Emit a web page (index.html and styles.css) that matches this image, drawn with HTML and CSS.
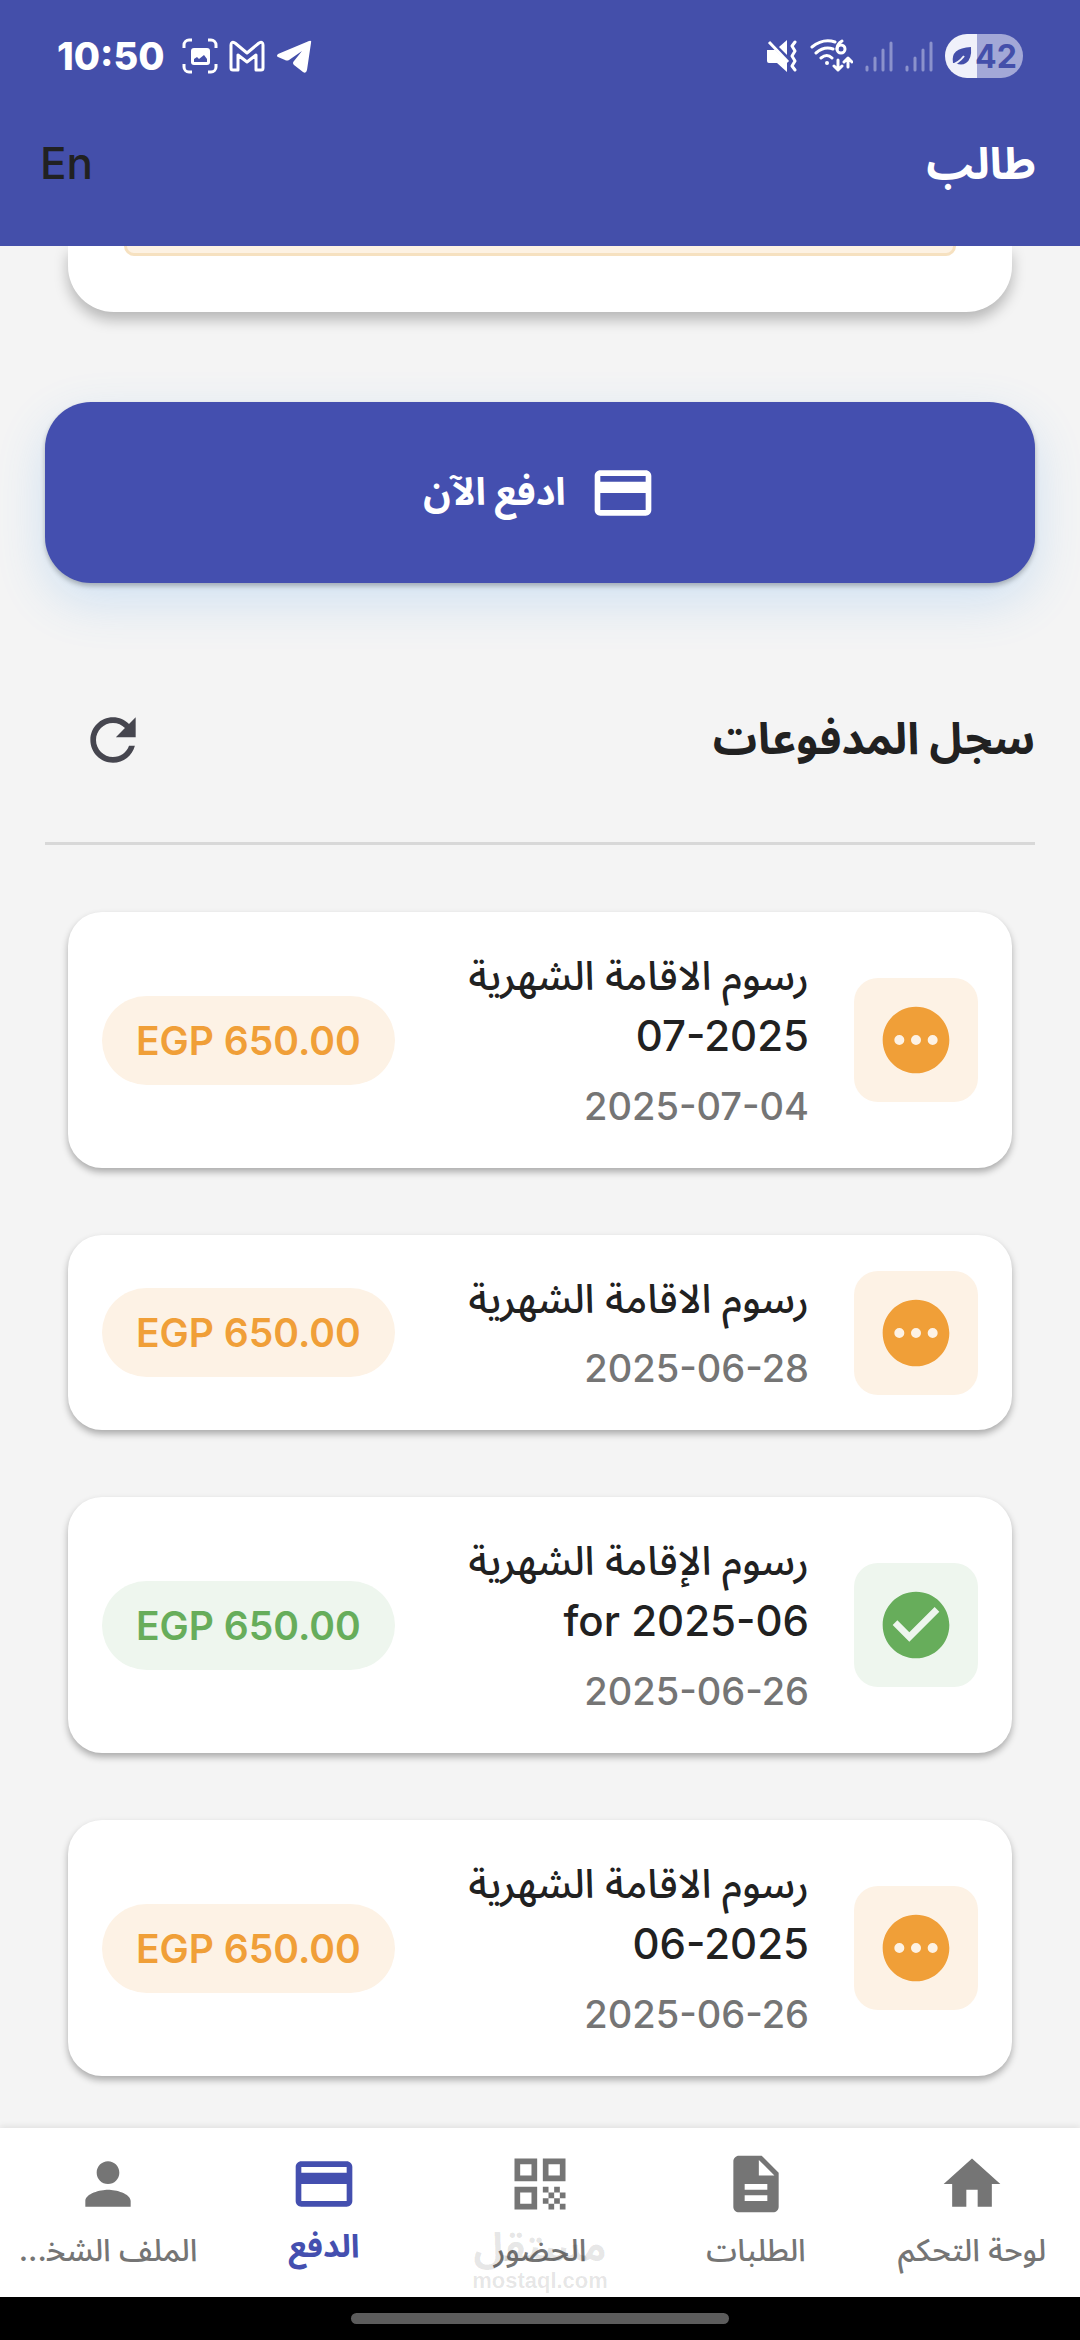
FILE: index.html
```html
<!DOCTYPE html>
<html lang="ar" dir="rtl">
<head>
    <meta charset="UTF-8">
    <meta name="viewport" content="width=device-width, initial-scale=1.0">
    <title>طالب - الدفع</title>
    <link rel="stylesheet" href="styles.css">
</head>
<body>
    <header>
        <div class="status-bar">
            <div class="status-left">
                <span class="clock">10:50</span>
                <svg width="36" height="36" viewBox="0 0 36 36"><path d="M2 10V7a5 5 0 0 1 5-5h3M26 2h3a5 5 0 0 1 5 5v3M34 26v3a5 5 0 0 1-5 5h-3M10 34H7a5 5 0 0 1-5-5v-3" fill="none" stroke="#fff" stroke-width="3"/><rect x="9" y="10" width="19" height="17" rx="3" fill="#fff"/><path d="M12 24v-3l3-2 2 2 5-4 3 4v3z" fill="#444faa"/></svg>
                <svg width="36" height="36" viewBox="0 0 36 36"><path d="M2 30V7q0-4 4-2l12 10L30 5q4-2 4 2v23q0 2-2 2h-5V17l-9 7-9-7v15H4q-2 0-2-2z" fill="none" stroke="#fff" stroke-width="3" stroke-linejoin="round"/></svg>
                <svg width="36" height="36" viewBox="0 0 36 36"><path d="M2 16 33 3q3-1 2 2l-4 27q-1 4-4 2l-9-7q-2-2 0-4l8-10-13 9q-2 1-4 0l-7-3q-2-1 0-3z" fill="#fff"/></svg>
            </div>
            <div class="status-right">
                <svg width="32" height="32" viewBox="0 0 32 32"><path d="M1 10h8l12 12v10L11 23H3q-2 0-2-2z" fill="#fff"/><path d="M13 7l8-7v15z" fill="#fff"/><path d="M3 2l19 20" stroke="#fff" stroke-width="3"/><path d="M29 2l-3 4 3 5-3 5 3 5-3 5 3 4" fill="none" stroke="#fff" stroke-width="3" stroke-linejoin="round" stroke-linecap="round"/></svg>
                <svg width="43" height="36" viewBox="0 0 43 36"><g fill="none" stroke="#fff" stroke-width="3" stroke-linecap="round" stroke-linejoin="round"><path d="M2 9Q13 0 25 4M6 15q8-7 17-4M11 20q6-5 11 0M28 22v10m-4-4 4 4 4-4M38 29V20m-4 4 4-4 4 4"/><circle cx="31" cy="11" r="4"/><path d="M27 11q0-5 5-8"/></g><circle cx="17" cy="25" r="2" fill="#fff"/></svg>
                <svg width="28" height="32" viewBox="0 0 28 32"><path d="M2 27v3M10 18v12M18 10v20M26 3v27" stroke="#8b92cc" stroke-width="3" stroke-linecap="round"/></svg>
                <svg width="28" height="32" viewBox="0 0 28 32"><path d="M2 27v3M10 18v12M18 10v20M26 3v27" stroke="#8b92cc" stroke-width="3" stroke-linecap="round"/></svg>
                <div class="battery">
                    <svg width="22" height="20" viewBox="0 0 22 20"><path d="M3 17Q0 2 21 1q1 12-5 16-5 3-10 0z" fill="#444faa"/><path d="M0 19q8-1 14-9" fill="none" stroke="#f0f1fa" stroke-width="2"/></svg>
                    <span>42</span>
                </div>
            </div>
        </div>
        <div class="title-bar">
            <h1>طالب</h1>
            <button class="btn-lang" type="button">En</button>
        </div>
    </header>

    <main>
        <div class="summary">
            <div class="summary-note"></div>
        </div>

        <button class="btn-pay" type="button">
            <svg width="68" height="68" viewBox="0 0 24 24"><path fill="currentColor" d="M20 4H4c-1.110 0-1.990.89-1.990 2L2 18c0 1.110.89 2 2 2h16c1.110 0 2-.89 2-2V6c0-1.110-.89-2-2-2zm0 14H4v-6h16v6zm0-10H4V6h16v2z"/></svg>
            ادفع الآن
        </button>

        <div class="section-head">
            <h2>سجل المدفوعات</h2>
            <button class="btn-refresh" type="button" aria-label="تحديث">
                <svg width="68" height="68" viewBox="0 0 24 24"><path fill="currentColor" d="M17.650 6.350C16.200 4.900 14.210 4 12 4c-4.420 0-7.990 3.580-7.990 8s3.570 8 7.990 8c3.730 0 6.840-2.550 7.730-6h-2.080c-.82 2.330-3.040 4-5.650 4-3.310 0-6-2.690-6-6s2.690-6 6-6c1.660 0 3.140.69 4.220 1.780L13 11h7V4l-2.350 2.350z"/></svg>
            </button>
        </div>

        <ul class="payments">
            <li class="payment pending">
                <div class="payment-icon"><svg width="80" height="80" viewBox="0 0 24 24"><path fill="currentColor" d="M12 2C6.480 2 2 6.480 2 12s4.480 10 10 10 10-4.480 10-10S17.520 2 12 2zM7 13.500a1.500 1.500 0 1 1 0-3 1.500 1.500 0 0 1 0 3zm5 0a1.500 1.500 0 1 1 0-3 1.500 1.500 0 0 1 0 3zm5 0a1.500 1.500 0 1 1 0-3 1.500 1.500 0 0 1 0 3z"/></svg></div>
                <div class="payment-info">
                    <h3>رسوم الاقامة الشهرية<br><bdi>07-2025</bdi></h3>
                    <time>2025-07-04</time>
                </div>
                <span class="amount" dir="ltr">EGP 650.00</span>
            </li>
            <li class="payment pending">
                <div class="payment-icon"><svg width="80" height="80" viewBox="0 0 24 24"><path fill="currentColor" d="M12 2C6.480 2 2 6.480 2 12s4.480 10 10 10 10-4.480 10-10S17.520 2 12 2zM7 13.500a1.500 1.500 0 1 1 0-3 1.500 1.500 0 0 1 0 3zm5 0a1.500 1.500 0 1 1 0-3 1.500 1.500 0 0 1 0 3zm5 0a1.500 1.500 0 1 1 0-3 1.500 1.500 0 0 1 0 3z"/></svg></div>
                <div class="payment-info">
                    <h3>رسوم الاقامة الشهرية</h3>
                    <time>2025-06-28</time>
                </div>
                <span class="amount" dir="ltr">EGP 650.00</span>
            </li>
            <li class="payment paid">
                <div class="payment-icon"><svg width="80" height="80" viewBox="0 0 24 24"><path fill="currentColor" d="M12 2C6.480 2 2 6.480 2 12s4.480 10 10 10 10-4.480 10-10S17.520 2 12 2zm-2 15l-5-5 1.410-1.410L10 14.170l7.590-7.590L19 8l-9 9z"/></svg></div>
                <div class="payment-info">
                    <h3>رسوم الإقامة الشهرية<br><bdi dir="ltr">for 2025-06</bdi></h3>
                    <time>2025-06-26</time>
                </div>
                <span class="amount" dir="ltr">EGP 650.00</span>
            </li>
            <li class="payment pending">
                <div class="payment-icon"><svg width="80" height="80" viewBox="0 0 24 24"><path fill="currentColor" d="M12 2C6.480 2 2 6.480 2 12s4.480 10 10 10 10-4.480 10-10S17.520 2 12 2zM7 13.500a1.500 1.500 0 1 1 0-3 1.500 1.500 0 0 1 0 3zm5 0a1.500 1.500 0 1 1 0-3 1.500 1.500 0 0 1 0 3zm5 0a1.500 1.500 0 1 1 0-3 1.500 1.500 0 0 1 0 3z"/></svg></div>
                <div class="payment-info">
                    <h3>رسوم الاقامة الشهرية<br><bdi>06-2025</bdi></h3>
                    <time>2025-06-26</time>
                </div>
                <span class="amount" dir="ltr">EGP 650.00</span>
            </li>
        </ul>
    </main>

    <footer>
        <nav>
            <a href="#home">
                <svg width="68" height="68" viewBox="0 0 24 24"><path fill="currentColor" d="M10 20v-6h4v6h5v-8h3L12 3 2 12h3v8z"/></svg>
                <span>لوحة التحكم</span>
            </a>
            <a href="#requests">
                <svg width="68" height="68" viewBox="0 0 24 24"><path fill="currentColor" d="M14 2H6c-1.100 0-1.990.9-1.990 2L4 20c0 1.100.89 2 1.990 2H18c1.100 0 2-.9 2-2V8l-6-6zm2 16H8v-2h8v2zm0-4H8v-2h8v2zm-3-5V3.500L18.500 9H13z"/></svg>
                <span>الطلبات</span>
            </a>
            <a href="#attendance">
                <svg width="68" height="68" viewBox="0 0 24 24"><path fill="currentColor" d="M3 11h8V3H3v8zm2-6h4v4H5V5zM3 21h8v-8H3v8zm2-6h4v4H5v-4zM13 3v8h8V3h-8zm6 6h-4V5h4v4zM19 19h2v2h-2zM13 13h2v2h-2zM15 15h2v2h-2zM13 17h2v2h-2zM15 19h2v2h-2zM17 17h2v2h-2zM17 13h2v2h-2zM19 15h2v2h-2z"/></svg>
                <span>الحضور</span>
            </a>
            <a href="#payment" class="active">
                <svg width="68" height="68" viewBox="0 0 24 24"><path fill="currentColor" d="M20 4H4c-1.110 0-1.990.89-1.990 2L2 18c0 1.110.89 2 2 2h16c1.110 0 2-.89 2-2V6c0-1.110-.89-2-2-2zm0 14H4v-6h16v6zm0-10H4V6h16v2z"/></svg>
                <span>الدفع</span>
            </a>
            <a href="#profile">
                <svg width="68" height="68" viewBox="0 0 24 24"><path fill="currentColor" d="M12 12c2.210 0 4-1.790 4-4s-1.790-4-4-4-4 1.790-4 4 1.790 4 4 4zm0 2c-2.670 0-8 1.340-8 4v2h16v-2c0-2.660-5.330-4-8-4z"/></svg>
                <span>الملف الشخ&zwj;...</span>
            </a>
        </nav>
        <div class="watermark">
            <span class="watermark-name">مستقل</span>
            <span class="watermark-url">mostaql.com</span>
        </div>
        <div class="gesture-bar"><i></i></div>
    </footer>
</body>
</html>
```

FILE: styles.css
```css
* {
    box-sizing: border-box;
}
body {
    font-family: Inter, 'Noto Sans Arabic', 'DejaVu Sans', sans-serif;
    font-weight: 500;
    background-color: #f4f4f4;
    color: #212121;
    margin: 0;
    height: 100vh;
    display: flex;
    flex-direction: column;
    overflow: hidden;
}
svg {
    display: block;
    flex: none;
}
button {
    font: inherit;
    border: none;
    background: none;
    padding: 0;
    cursor: pointer;
}
h1, h2, h3 {
    margin: 0;
    font-weight: 500;
}
header {
    flex: none;
    background-color: #444faa;
    color: #fff;
    padding: 32px 44px 0 40px;
}
.status-bar {
    display: flex;
    justify-content: space-between;
    align-items: center;
    direction: ltr;
    height: 48px;
    padding: 0 13px 0 17px;
}
.status-left {
    display: flex;
    align-items: center;
    gap: 11px;
}
.clock {
    font-size: 38px;
    font-weight: 800;
    line-height: 48px;
    margin-right: 6px;
}
.status-right {
    display: flex;
    align-items: center;
    gap: 12px;
}
.battery {
    display: flex;
    align-items: center;
    gap: 3px;
    height: 44px;
    width: 78px;
    padding-left: 5px;
    border-radius: 22px;
    background: linear-gradient(to right, #f0f1fa 32px, #a3a8d7 32px);
    color: #444faa;
    font-size: 32px;
    font-weight: 700;
}
.title-bar {
    display: flex;
    justify-content: space-between;
    align-items: center;
    height: 166px;
}
.title-bar h1 {
    font-size: 44px;
    font-weight: 700;
    line-height: 72px;
}
.btn-lang {
    color: #212121;
    font-size: 44px;
    line-height: 72px;
}
main {
    flex: 1;
    min-height: 0;
    overflow: hidden;
    padding: 0 45px;
}
.summary {
    height: 66px;
    margin: 0 23px 90px;
    padding: 0 56px;
    background-color: #fff;
    border-radius: 0 0 46px 46px;
    box-shadow: 0 8px 14px rgba(0, 0, 0, 0.25);
}
.summary-note {
    height: 10px;
    background-color: #fdf2e3;
    border: 3px solid #f6e1c0;
    border-top: none;
    border-radius: 0 0 20px 20px;
}
.btn-pay {
    display: flex;
    justify-content: center;
    align-items: center;
    gap: 23px;
    width: 100%;
    height: 181px;
    border-radius: 46px;
    background-color: #444faf;
    box-shadow: 0 3px 5px rgba(0, 0, 0, 0.25), 0 18px 50px rgba(60, 150, 240, 0.2);
    color: #fff;
    font-size: 38px;
    font-weight: 700;
}
.section-head {
    display: flex;
    justify-content: space-between;
    align-items: center;
    height: 262px;
    padding-top: 54px;
    border-bottom: 3px solid #d8d8d8;
}
.section-head h2 {
    font-size: 44px;
    font-weight: 700;
}
.btn-refresh {
    color: #46464f;
    padding: 0 34px;
}
.payments {
    list-style: none;
    margin: 0;
    padding: 67px 23px;
    display: flex;
    flex-direction: column;
    gap: 67px;
}
.payment {
    display: flex;
    align-items: center;
    gap: 45px;
    padding: 34px;
    background-color: #fff;
    border-radius: 34px;
    box-shadow: 0 4px 7px rgba(0, 0, 0, 0.3);
}
.payment-icon {
    display: flex;
    justify-content: center;
    align-items: center;
    width: 124px;
    height: 124px;
    border-radius: 24px;
}
.payment-info {
    flex: 1;
}
.payment-info h3 {
    font-size: 40px;
    line-height: 60px;
}
.payment-info bdi {
    font-size: 42px;
}
.payment-info time {
    display: block;
    font-size: 38px;
    line-height: 56px;
    margin-top: 11px;
    color: #757575;
}
.amount {
    padding: 0 34px;
    border-radius: 45px;
    font-size: 39px;
    font-weight: 600;
    line-height: 89px;
}
.pending .payment-icon, .pending .amount {
    background-color: #fdf2e5;
    color: #f09f38;
}
.paid .payment-icon, .paid .amount {
    background-color: #eef6ee;
    color: #67ad5b;
}
footer {
    flex: none;
    position: relative;
    background-color: #fff;
    box-shadow: 0 -2px 6px rgba(0, 0, 0, 0.08);
}
nav {
    display: grid;
    grid-template-columns: repeat(5, 1fr);
    height: 169px;
}
nav a {
    display: flex;
    flex-direction: column;
    align-items: center;
    gap: 8px;
    min-width: 0;
    padding-top: 22px;
    color: #757575;
    text-decoration: none;
    font-size: 31px;
    line-height: 48px;
    white-space: nowrap;
}
nav a.active {
    gap: 4px;
    color: #444faf;
    font-size: 32px;
    font-weight: 700;
}
/* overlay stamp, sits above the middle tab */
.watermark {
    position: absolute;
    top: 96px;
    left: 0;
    right: 0;
    display: flex;
    flex-direction: column;
    align-items: center;
    color: rgba(0, 0, 0, 0.1);
    pointer-events: none;
}
.watermark-name {
    font-size: 40px;
    font-weight: 700;
    line-height: 46px;
}
.watermark-url {
    font-family: 'Liberation Sans', sans-serif;
    font-size: 22px;
    font-weight: 700;
    line-height: 22px;
}
.gesture-bar {
    display: flex;
    justify-content: center;
    align-items: center;
    height: 43px;
    background-color: #000;
}
.gesture-bar i {
    width: 35%;
    height: 11px;
    border-radius: 6px;
    background-color: #5c5c5c;
}
```
